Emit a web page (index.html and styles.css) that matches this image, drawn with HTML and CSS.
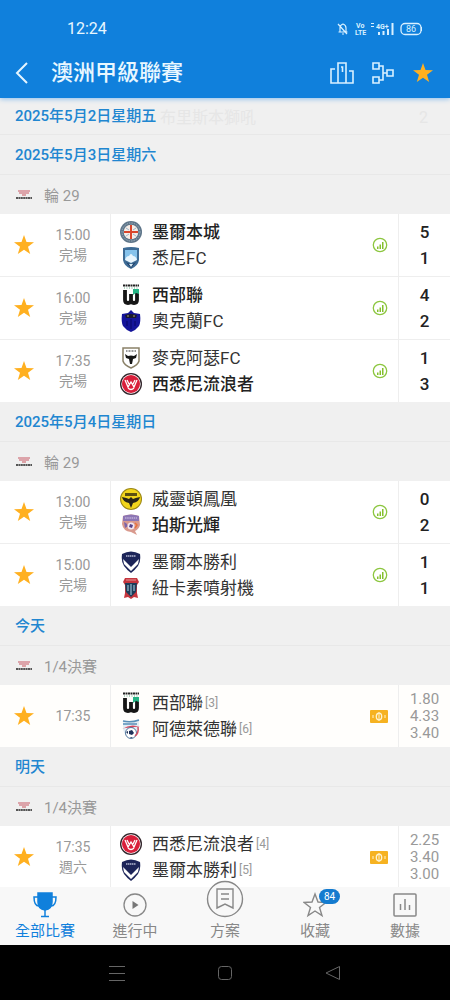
FILE: index.html
```html
<!DOCTYPE html>
<html lang="zh-Hant">
<head>
    <meta charset="UTF-8">
    <meta name="viewport" content="width=device-width, initial-scale=1.0">
    <title>澳洲甲級聯賽</title>
    <link rel="stylesheet" href="styles.css">
</head>
<body>
    <!-- shared icons and team logos -->
    <svg class="defs" aria-hidden="true">
        <symbol id="star" viewBox="0 0 22 22"><path fill="#ffb020" d="M11 1l2.5 7.1 7.5.2-6 4.5 2.2 7.2-6.2-4.3L4.800 20 7 12.800 1 8.300l7.500-.2z"/></symbol>
        <symbol id="league" viewBox="0 0 18 12">
            <path d="M3 2h12M4 4h10" stroke="#d58a92" stroke-width="1.500"/>
            <path d="M7 6h4" stroke="#c8545c"/>
            <path d="M1 9h16" stroke="#555" stroke-width="2" stroke-dasharray="2 .4"/>
        </symbol>
        <symbol id="chart" viewBox="0 0 16 16">
            <circle cx="8" cy="8" r="6.700" fill="#fff" stroke="#8cc63f" stroke-width="1.300"/>
            <path d="M5 9.500h1.500v2.500H5zM7.500 7.500H9V12H7.500zM10 5h1.500v7H10z" fill="#84c02c"/>
        </symbol>
        <symbol id="cash" viewBox="0 0 18 13">
            <rect width="18" height="13" rx="1" fill="#f6b221"/>
            <ellipse cx="9" cy="6.500" rx="2.700" ry="3.400" fill="none" stroke="#fff3d0" stroke-width="1.300"/>
            <path d="M9 2v9M3 5v3M15 5v3" stroke="#fff3d0"/>
        </symbol>
        <symbol id="city" viewBox="0 0 22 22">
            <circle cx="11" cy="11" r="11" fill="#5d7488"/>
            <circle cx="11" cy="11" r="9" fill="none" stroke="#9fb2c0" stroke-width="1" stroke-dasharray="1.500 1"/>
            <circle cx="11" cy="11" r="7.300" fill="#f5ece6"/>
            <path d="M11 4v14M4 11h14" stroke="#d9462c" stroke-width="2"/>
            <path d="M6 7l3 2M16 7l-3 2M6 15l3-2M16 15l-3-2" stroke="#9bb7cd"/>
        </symbol>
        <symbol id="sydney" viewBox="0 0 22 22">
            <path d="M3 1q8-2 16 0v12q-1 6-8 9-7-3-8-9z" fill="#3d6b95"/>
            <path d="M5 3h12v10H5z" fill="#86c3ec"/>
            <path d="M5 13q1-4 4-4 2-4 4 0 3 0 4 4l-6 3z" fill="#e8f5fd"/>
            <path d="M6 15l5 3 5-3-5 6z" fill="#1d3a63"/>
            <path d="M9 17h4l-2 3z" fill="#d9edf8"/>
        </symbol>
        <symbol id="western" viewBox="0 0 22 22">
            <path d="M3 1.500h16" stroke="#222" stroke-width="2" stroke-dasharray="2 .5"/>
            <path d="M4 4h14" stroke="#6a8" stroke-dasharray="1 1.500"/>
            <path d="M5 6v10q0 3 3 3t3-3V10M11 16q0 3 3 3t3-3V6" fill="none" stroke="#161616" stroke-width="3.800"/>
            <path d="M13 5h6v5l-3-1-3 2z" fill="#25b384"/>
            <path d="M11 5v5" stroke="#fff"/>
        </symbol>
        <symbol id="auckland" viewBox="0 0 22 22">
            <path d="M11 0l3 3 6 1q1 8-1 12-3 4-8 6-5-2-8-6-2-4-1-12l6-1z" fill="#14149a"/>
            <path d="M5 5q6-2 12 0l-1 3H6z" fill="#18182f"/>
            <path d="M7 6h2M13 6h2" stroke="#a59f72"/>
            <path d="M11 9v10M7 11v5M15 11v5" stroke="#060665"/>
        </symbol>
        <symbol id="macarthur" viewBox="0 0 22 22">
            <path d="M3 1h16v13q-1 4-8 7-7-3-8-7z" fill="#fff" stroke="#8a8168" stroke-width="1.500"/>
            <path d="M6 4h10" stroke="#777" stroke-width="1.500" stroke-dasharray="1 .5"/>
            <path d="M5 7l3 2q3-1 6 0l3-2-1 4-3 1-1 5h-2l-1-5-3-1z" fill="#171717"/>
        </symbol>
        <symbol id="wanderers" viewBox="0 0 22 22">
            <circle cx="11" cy="11" r="11" fill="#302329"/>
            <circle cx="11" cy="11" r="9.700" fill="#fff"/>
            <circle cx="11" cy="11" r="9" fill="#d91f3b"/>
            <path d="M5 7l3 7 3-5 3 5 3-7M7 7l2 4M15 7l-2 4M8 15q3 3 6 0" fill="none" stroke="#fff" stroke-width="1.300"/>
        </symbol>
        <symbol id="phoenix" viewBox="0 0 22 22">
            <circle cx="11" cy="11" r="11" fill="#9a8614"/>
            <circle cx="11" cy="11" r="10" fill="#f2d51b"/>
            <path d="M5 5h12v3H5z" fill="#5c5010"/>
            <path d="M2 9q5 1 7 2l2-2 2 2q2-1 7-2-1 5-7 6l-2 5-2-5Q3 14 2 9z" fill="#282519"/>
        </symbol>
        <symbol id="perth" viewBox="0 0 22 22">
            <path d="M3 2q8-3 16 0l1 9q-1 4-5 6l2 4-6-3Q3 17 2 10z" fill="#d99a8e"/>
            <path d="M3 2q8-3 16 0v5H3z" fill="#8d76b4"/>
            <path d="M5 4h12" stroke="#d7caea" stroke-dasharray="1.500 .7"/>
            <path d="M4 8q3 1 4 4l-3 2z" fill="#7d65a8"/>
            <circle cx="11" cy="12" r="3.500" fill="#f2e7f1"/>
            <path d="M10 10l3 1-1 3-3-1z" fill="#574189"/>
            <path d="M15 9l2 2-2 3" fill="none" stroke="#e9733e" stroke-width="1.500"/>
        </symbol>
        <symbol id="victory" viewBox="0 0 22 22">
            <path d="M2 3q9-5 18 0 1 8-2 12-3 4-7 7-4-3-7-7Q1 11 2 3z" fill="#1c2459"/>
            <path d="M3 8l8 8 8-8-1 5-7 7-7-7z" fill="#fff"/>
            <path d="M6 5h10" stroke="#b2b7d1" stroke-width="1.500" stroke-dasharray="1.500 .5"/>
        </symbol>
        <symbol id="jets" viewBox="0 0 22 22">
            <path d="M5 1h12l2 4-2 3v8l1 5-4-1-3 2-3-2-4 1 1-5V8L3 5z" fill="#c5363e"/>
            <path d="M5 6h12l-1 9-5 5-5-5z" fill="#1c3d5a"/>
            <path d="M11 7v11M8 8v6M14 8v6" stroke="#8db1c5" stroke-width="1.300"/>
            <path d="M6 3h10" stroke="#e59597"/>
        </symbol>
        <symbol id="adelaide" viewBox="0 0 22 22">
            <path d="M3 2q8 3 16-1v9q-1 7-8 11Q4 18 3 11z" fill="#e3edf4"/>
            <path d="M3 3q8 2 16-1M3 6h14" fill="none" stroke="#5a8fb8" stroke-width="1.500"/>
            <path d="M2 11q9-6 18-2-5-1-8 1-6-1-10 1z" fill="#d6455d"/>
            <circle cx="11" cy="15" r="5.500" fill="#fff" stroke="#53779d"/>
            <path d="M9 13l3-1 2 3-2 2-3-1zM6 14l2-1v3zM11 19l2 1h-3z" fill="#1f3159"/>
            <path d="M18 9q1 6-3 9" fill="none" stroke="#cf5063" stroke-width="1.500"/>
        </symbol>
    </svg>

    <div class="app">
        <header class="header">
            <div class="status-bar">
                <span class="clock">12:24</span>
                <svg width="85" height="16" viewBox="0 0 85 16" fill="none" stroke="#d9f0ff">
                    <path d="M1.500 11h9M3 11V7q0-3 3-4 3 1 3 4v4M5 13h2M1 3l9 10" stroke-width="1.200"/>
                    <g class="signal-text">
                        <text x="19" y="7">Vo</text>
                        <text x="18" y="14">LTE</text>
                        <text x="39" y="8">4G+</text>
                    </g>
                    <path d="M34 5.500h3M34 2.500h3" />
                    <path d="M42 14v-3M46.500 14v-4M51 14V8M55.500 14V2" stroke-width="2"/>
                    <rect x="65" y="2.500" width="20" height="11" rx="4" stroke-width="1.300" transform="translate(-1)"/>
                    <path d="M84.500 6v4"/>
                    <text class="battery-text" x="69" y="11">86</text>
                </svg>
            </div>
            <div class="title-bar">
                <button class="icon-button" aria-label="返回">
                    <svg width="14" height="22" viewBox="0 0 14 22" fill="none" stroke="#e4f5ff" stroke-width="2"><path d="M12 1L2 11l10 10"/></svg>
                </button>
                <h1>澳洲甲級聯賽</h1>
                <button class="icon-button" aria-label="積分榜">
                    <svg width="24" height="22" viewBox="0 0 24 22" fill="none" stroke="#d9f0ff" stroke-width="1.600"><path d="M5 7H1v14h22V9h-4M8 21V1h8v20M11 5h1.500v5"/></svg>
                </button>
                <button class="icon-button" aria-label="賽程圖">
                    <svg width="22" height="22" viewBox="0 0 22 22" fill="none" stroke="#d9f0ff" stroke-width="1.600"><path d="M1 1h6v6H1zM1 15h6v6H1zM15 8h6v6h-6zM7 4h4v14H7M11 11h4"/></svg>
                </button>
                <button class="icon-button" aria-label="收藏聯賽">
                    <svg width="22" height="22"><use href="#star"/></svg>
                </button>
            </div>
        </header>

        <main class="fixtures">
            <div class="sticky-date">
                <h2 class="date">2025年5月2日星期五</h2>
                <div class="under"><span>布里斯本獅吼</span><span class="under-score">2</span></div>
            </div>

            <section>
                <h2 class="date">2025年5月3日星期六</h2>
                <h3 class="round"><svg><use href="#league"/></svg>輪 29</h3>
                <article class="match">
                    <button class="favourite" aria-label="收藏"><svg><use href="#star"/></svg></button>
                    <div class="time"><span>15:00</span><span>完場</span></div>
                    <div class="teams">
                        <div class="team winner"><svg><use href="#city"/></svg>墨爾本城</div>
                        <div class="team"><svg><use href="#sydney"/></svg>悉尼FC</div>
                    </div>
                    <svg class="chart"><use href="#chart"/></svg>
                    <div class="score"><span>5</span><span>1</span></div>
                </article>
                <article class="match">
                    <button class="favourite" aria-label="收藏"><svg><use href="#star"/></svg></button>
                    <div class="time"><span>16:00</span><span>完場</span></div>
                    <div class="teams">
                        <div class="team winner"><svg><use href="#western"/></svg>西部聯</div>
                        <div class="team"><svg><use href="#auckland"/></svg>奧克蘭FC</div>
                    </div>
                    <svg class="chart"><use href="#chart"/></svg>
                    <div class="score"><span>4</span><span>2</span></div>
                </article>
                <article class="match">
                    <button class="favourite" aria-label="收藏"><svg><use href="#star"/></svg></button>
                    <div class="time"><span>17:35</span><span>完場</span></div>
                    <div class="teams">
                        <div class="team"><svg><use href="#macarthur"/></svg>麥克阿瑟FC</div>
                        <div class="team winner"><svg><use href="#wanderers"/></svg>西悉尼流浪者</div>
                    </div>
                    <svg class="chart"><use href="#chart"/></svg>
                    <div class="score"><span>1</span><span>3</span></div>
                </article>
            </section>

            <section>
                <h2 class="date">2025年5月4日星期日</h2>
                <h3 class="round"><svg><use href="#league"/></svg>輪 29</h3>
                <article class="match">
                    <button class="favourite" aria-label="收藏"><svg><use href="#star"/></svg></button>
                    <div class="time"><span>13:00</span><span>完場</span></div>
                    <div class="teams">
                        <div class="team"><svg><use href="#phoenix"/></svg>威靈頓鳳凰</div>
                        <div class="team winner"><svg><use href="#perth"/></svg>珀斯光輝</div>
                    </div>
                    <svg class="chart"><use href="#chart"/></svg>
                    <div class="score"><span>0</span><span>2</span></div>
                </article>
                <article class="match">
                    <button class="favourite" aria-label="收藏"><svg><use href="#star"/></svg></button>
                    <div class="time"><span>15:00</span><span>完場</span></div>
                    <div class="teams">
                        <div class="team"><svg><use href="#victory"/></svg>墨爾本勝利</div>
                        <div class="team"><svg><use href="#jets"/></svg>紐卡素噴射機</div>
                    </div>
                    <svg class="chart"><use href="#chart"/></svg>
                    <div class="score"><span>1</span><span>1</span></div>
                </article>
            </section>

            <section>
                <h2 class="date">今天</h2>
                <h3 class="round"><svg><use href="#league"/></svg>1/4決賽</h3>
                <article class="match today">
                    <button class="favourite" aria-label="收藏"><svg><use href="#star"/></svg></button>
                    <div class="time"><span>17:35</span></div>
                    <div class="teams">
                        <div class="team"><svg><use href="#western"/></svg>西部聯<small>[3]</small></div>
                        <div class="team"><svg><use href="#adelaide"/></svg>阿德萊德聯<small>[6]</small></div>
                    </div>
                    <svg class="cash"><use href="#cash"/></svg>
                    <div class="odds"><span>1.80</span><span>4.33</span><span>3.40</span></div>
                </article>
            </section>

            <section>
                <h2 class="date">明天</h2>
                <h3 class="round"><svg><use href="#league"/></svg>1/4決賽</h3>
                <article class="match">
                    <button class="favourite" aria-label="收藏"><svg><use href="#star"/></svg></button>
                    <div class="time"><span>17:35</span><span>週六</span></div>
                    <div class="teams">
                        <div class="team"><svg><use href="#wanderers"/></svg>西悉尼流浪者<small>[4]</small></div>
                        <div class="team"><svg><use href="#victory"/></svg>墨爾本勝利<small>[5]</small></div>
                    </div>
                    <svg class="cash"><use href="#cash"/></svg>
                    <div class="odds"><span>2.25</span><span>3.40</span><span>3.00</span></div>
                </article>
            </section>
        </main>

        <nav class="tabs">
            <a href="#" class="tab active">
                <svg width="24" height="26" viewBox="0 0 24 26" fill="none" stroke="#1080dc" stroke-width="1.500">
                    <path d="M5 1h14v9q0 7-7 8-7-1-7-8z" fill="#1080dc"/>
                    <path d="M5 5H1q0 9 5 9M19 5h4q0 9-5 9M12 18v6M8 24.500h8"/>
                </svg>
                全部比賽
            </a>
            <a href="#" class="tab">
                <svg width="24" height="26" viewBox="0 0 24 26"><circle cx="12" cy="13" r="11" fill="none" stroke="#888" stroke-width="1.300"/><path d="M9.500 9v8l6-4z" fill="#777"/></svg>
                進行中
            </a>
            <a href="#" class="tab plan">
                <svg width="38" height="38" viewBox="0 0 38 38" fill="none" stroke="#888" stroke-width="1.400">
                    <circle cx="19" cy="19" r="17.500" fill="#f8f8f8"/>
                    <path d="M11 9h16v19l-8-4-8 4zM15 14h8M15 19h8"/>
                </svg>
                方案
            </a>
            <a href="#" class="tab">
                <svg width="24" height="26" viewBox="0 0 24 26" fill="none" stroke="#888" stroke-width="1.400"><path d="M12 2l3 8 8 .5-6.500 5 2.500 8-7-4.500-7 4.500 2.500-8L1 10.500 9 10z"/></svg>
                <span class="badge">84</span>
                收藏
            </a>
            <a href="#" class="tab">
                <svg width="24" height="26" viewBox="0 0 24 26" fill="none" stroke="#888" stroke-width="1.500"><rect x="1" y="2" width="22" height="22" rx="1"/><path d="M7.500 12v6M12 7v11M16.500 13v5"/></svg>
                數據
            </a>
        </nav>

        <footer class="system-bar">
            <button class="icon-button" aria-label="選單"><svg width="16" height="16" viewBox="0 0 16 16" stroke="#666"><path d="M0 1.500h16M0 8.500h16M0 15.500h16"/></svg></button>
            <button class="icon-button" aria-label="主畫面"><svg width="16" height="16" viewBox="0 0 16 16" fill="none" stroke="#666"><rect x="1.500" y="1.500" width="13" height="13" rx="3"/></svg></button>
            <button class="icon-button" aria-label="上一頁"><svg width="16" height="16" viewBox="0 0 16 16" fill="none" stroke="#666" stroke-linejoin="round"><path d="M14.500 1.500v13L1 8z"/></svg></button>
        </footer>
    </div>
</body>
</html>
```
FILE: styles.css
```css
* {
    box-sizing: border-box;
}

body {
    margin: 0;
    font-family: Roboto, "Noto Sans CJK TC", sans-serif;
    font-size: 15px;
    background-color: #f0f0f0;
}

h1, h2, h3 {
    margin: 0;
}

button {
    padding: 0;
    border: none;
    background: none;
    cursor: pointer;
}

svg {
    display: block;
    flex: none;
}

.defs {
    position: absolute;
    width: 0;
    height: 0;
}

.app {
    display: flex;
    flex-direction: column;
    height: 100vh;
}

/* header */
.header {
    position: relative;
    z-index: 1;
    flex: none;
    padding-bottom: 8px;
    background-color: #1080dc;
    color: #e8f7ff;
    box-shadow: 0 1px 5px #8abdec;
}

.status-bar {
    display: flex;
    align-items: center;
    justify-content: space-between;
    padding: 20px 28px 0 67px;
}

.clock {
    font-size: 16px;
    line-height: 18px;
}

.signal-text {
    font-size: 7px;
    font-weight: 700;
    fill: #d9f0ff;
    stroke: none;
}

.battery-text {
    font-size: 9px;
    fill: #d9f0ff;
    stroke: none;
}

.title-bar {
    display: flex;
    align-items: center;
    gap: 18px;
    padding: 18px 16px 0 15px;
}

.title-bar h1 {
    flex: 1;
    padding-left: 4px;
    font-size: 22px;
    font-weight: 500;
    line-height: 34px;
}

/* match list */
.fixtures {
    flex: 1;
    min-height: 0;
    overflow: hidden;
}

.date {
    height: 40px;
    padding: 0 15px;
    border-bottom: 1px solid #e8e8e8;
    color: #2186d0;
    font-size: 15px;
    font-weight: 500;
    line-height: 40px;
}

.sticky-date {
    position: relative;
}

.sticky-date .date {
    height: 37px;
    line-height: 36px;
}

.under {
    position: absolute;
    top: 0;
    left: 160px;
    right: 22px;
    display: flex;
    justify-content: space-between;
    color: #e6e6e6;
    font-size: 16px;
    line-height: 40px;
}

.round {
    display: flex;
    align-items: center;
    gap: 11px;
    height: 39px;
    padding: 0 15px;
    color: #999;
    font-size: 15px;
    font-weight: 400;
}

.round svg {
    width: 18px;
    height: 12px;
}

.match {
    display: grid;
    grid-template-columns: 48px 62px 1fr 35px 52px;
    align-items: center;
    height: 62px;
    background-color: #fff;
}

.match + .match {
    height: 63px;
    border-top: 1px solid #eee;
}

.today {
    background-color: #fffefc;
}

.favourite svg {
    width: 22px;
    height: 22px;
    margin: auto;
}

.time {
    display: flex;
    flex-direction: column;
    padding-right: 12px;
    color: #999;
    font-size: 14px;
    line-height: 20px;
    text-align: center;
}

.teams {
    align-self: stretch;
    display: flex;
    flex-direction: column;
    justify-content: center;
    padding-left: 9px;
    border-left: 1px solid #eee;
}

.team {
    display: flex;
    align-items: center;
    gap: 10px;
    color: #333;
    font-size: 17px;
    line-height: 26px;
}

.team svg {
    width: 22px;
    height: 22px;
}

.team small {
    margin-left: -8px;
    color: #999;
    font-size: 12px;
}

.winner {
    color: #222;
    font-weight: 500;
}

.chart {
    width: 16px;
    height: 16px;
    margin-left: 9px;
}

.cash {
    width: 18px;
    height: 13px;
    margin-left: 7px;
}

.score, .odds {
    align-self: stretch;
    display: flex;
    flex-direction: column;
    justify-content: center;
    border-left: 1px solid #eee;
    text-align: center;
}

.score {
    color: #222;
    font-size: 17px;
    font-weight: 500;
    line-height: 26px;
}

.odds {
    color: #999;
    font-size: 15px;
    line-height: 17px;
}

/* bottom tabs */
.tabs {
    flex: none;
    display: grid;
    grid-template-columns: repeat(5, 1fr);
    align-items: end;
    height: 58px;
    background-color: #f8f8f8;
}

.tab {
    position: relative;
    display: flex;
    flex-direction: column;
    align-items: center;
    gap: 2px;
    padding-bottom: 3px;
    color: #888;
    font-size: 15px;
    line-height: 22px;
    text-decoration: none;
}

.active {
    color: #1080dc;
}

.plan {
    margin-top: -16px;
}

.badge {
    position: absolute;
    top: -3px;
    left: calc(50% + 4px);
    width: 21px;
    border-radius: 8px;
    background-color: #147bcf;
    color: #fff;
    font-size: 10px;
    line-height: 15px;
    text-align: center;
}

.system-bar {
    flex: none;
    display: flex;
    align-items: center;
    justify-content: center;
    gap: 92px;
    height: 55px;
    background-color: #000;
}
```
